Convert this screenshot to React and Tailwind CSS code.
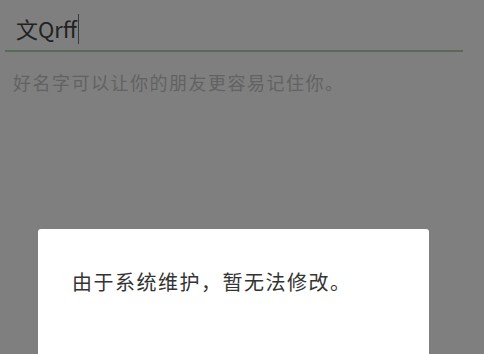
export default function App() {
  return (
    <div
      className="w-[484px] h-[354px] overflow-hidden bg-[#7f7f7f] flex flex-col"
      style={{ fontFamily: '"Noto Sans CJK SC", "Noto Sans", sans-serif' }}
    >
      <div className="pl-[16px] pt-[12px] h-[50px] flex items-start">
        <span className="text-[22px] leading-[32px] text-[#222222]">文Qrff</span>
        <span className="w-[1px] h-[30px] bg-[#3a3a3a] ml-[1px] mt-[2px]"></span>
      </div>
      <div className="ml-[5px] w-[458px] h-[2px] bg-[#586b58]"></div>
      <div className="pl-[13px] pt-[16px] text-[18px] tracking-[1.5px] leading-[28px] text-[#626262]">
        好名字可以让你的朋友更容易记住你。
      </div>
      <div className="flex-1 flex flex-col justify-end">
        <div className="ml-[38px] w-[391px] h-[125px] bg-white rounded-t-[3px] pl-[34px] pt-[37px]">
          <div className="text-[20px] tracking-[1.5px] leading-[32px] text-[#333333]">由于系统维护，暂无法修改。</div>
        </div>
      </div>
    </div>
  );
}
